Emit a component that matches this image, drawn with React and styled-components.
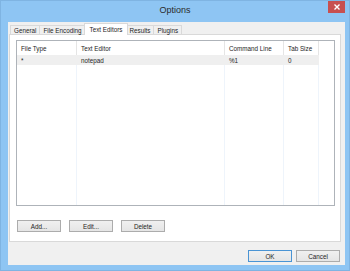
import React from "react";
import styled, { createGlobalStyle } from "styled-components";

const Global = createGlobalStyle`
  html, body {
    margin: 0;
    padding: 0;
    background: #8ec5f3;
  }
  body {
    font-family: "Liberation Sans", Arial, sans-serif;
  }
`;

const Frame = styled.div`
  width: 350px;
  height: 271px;
  box-sizing: border-box;
  background: #8ec5f3;
  border: 1px solid #7fb4e2;
  padding: 0 4px 5px 7px;
  display: flex;
  flex-direction: column;
`;

const TitleBar = styled.div`
  height: 21px;
  display: grid;
  grid-template-columns: 1fr auto 1fr;
  align-items: start;
`;

const Title = styled.div`
  grid-column: 2;
  font-size: 9px;
  color: #2b2b2b;
  margin-top: 4px;
  margin-left: -3px;
`;

const CloseBtn = styled.div`
  grid-column: 3;
  justify-self: end;
  width: 17px;
  height: 12px;
  background: #c75050;
  display: flex;
  align-items: center;
  justify-content: center;
`;

const Client = styled.div`
  flex: 1;
  background: #f0f0f0;
  padding: 2px 4px 3px 1px;
  display: flex;
  flex-direction: column;
`;

const TabRow = styled.div`
  display: flex;
  align-items: flex-end;
  height: 11px;
  padding-left: 1px;
  position: relative;
  z-index: 1;
`;

const Tab = styled.div`
  height: ${(p) => (p.$active ? "12px" : "10px")};
  box-sizing: border-box;
  padding: 0 ${(p) => (p.$active ? "5px" : "3px")};
  margin-right: ${(p) => (p.$active ? "-2px" : "0")};
  margin-left: ${(p) => (p.$active ? "-2px" : "-1px")};
  border: 1px solid #d9d9d9;
  border-bottom: ${(p) => (p.$active ? "none" : "1px solid #d9d9d9")};
  background: ${(p) => (p.$active ? "#ffffff" : "#f0f0f0")};
  font-size: 6.3px;
  color: #1e1e1e;
  display: flex;
  align-items: center;
  position: relative;
  z-index: ${(p) => (p.$active ? 2 : 1)};
  &:first-child {
    margin-left: 0;
  }
`;

const Panel = styled.div`
  height: 208px;
  box-sizing: border-box;
  border: 1px solid #d9d9d9;
  margin-top: -1px;
  background: #ffffff;
  padding: 5px 5px 0 6px;
  display: flex;
  flex-direction: column;
`;

const ListView = styled.div`
  height: 166px;
  box-sizing: border-box;
  border: 1px solid #aeb3b9;
  background: #fff;
  display: grid;
  grid-template-columns: 60px 148px 59px 35px 1fr;
`;

const Column = styled.div`
  display: flex;
  flex-direction: column;
  border-right: ${(p) => (p.$last ? "none" : "1px solid #eef4fb")};
`;

const HeadCell = styled.div`
  height: 14px;
  box-sizing: border-box;
  padding: 0 0 0 4px;
  font-size: 6.3px;
  color: #1e1e1e;
  display: flex;
  align-items: center;
  background: #fff;
  margin-right: ${(p) => (p.$last ? "0" : "-1px")};
  border-right: ${(p) => (p.$last ? "none" : "1px solid #e5e5e5")};
`;

const Cell = styled.div`
  height: 10px;
  box-sizing: border-box;
  padding: 0 0 0 4px;
  font-size: 6.3px;
  color: #1e1e1e;
  display: flex;
  align-items: center;
  background: ${(p) => (p.$blank ? "transparent" : "#efefef")};
  margin-right: ${(p) => (p.$blank ? "0" : "-1px")};
`;

const ButtonRow = styled.div`
  display: flex;
  gap: 8px;
  margin-top: 14px;
  padding-left: 1px;
`;

const Button = styled.div`
  width: 44px;
  height: 12px;
  box-sizing: border-box;
  border: 1px solid ${(p) => (p.$default ? "#4a94d4" : "#acacac")};
  background: linear-gradient(#f0f0f0, #e5e5e5);
  font-size: 6.3px;
  color: #1e1e1e;
  display: flex;
  align-items: center;
  justify-content: center;
`;

const Footer = styled.div`
  flex: 1;
  display: flex;
  justify-content: flex-end;
  align-items: flex-end;
  gap: 4px;
  padding-right: 1px;
`;

const columns = [
  { head: "File Type", value: "*" },
  { head: "Text Editor", value: "notepad" },
  { head: "Command Line", value: "%1" },
  { head: "Tab Size", value: "0" },
];

const tabs = ["General", "File Encoding", "Text Editors", "Results", "Plugins"];

export default function App() {
  return (
    <>
      <Global />
      <Frame>
        <TitleBar>
          <Title>Options</Title>
          <CloseBtn>
            <svg width="6" height="6" viewBox="0 0 6 6">
              <path d="M0.5 0.5 L5.5 5.5 M5.5 0.5 L0.5 5.5" stroke="#fff" strokeWidth="1.4" />
            </svg>
          </CloseBtn>
        </TitleBar>
        <Client>
          <TabRow>
            {tabs.map((t) => (
              <Tab key={t} $active={t === "Text Editors"}>
                {t}
              </Tab>
            ))}
          </TabRow>
          <Panel>
            <ListView>
              {columns.map((c) => (
                <Column key={c.head}>
                  <HeadCell>{c.head}</HeadCell>
                  <Cell>{c.value}</Cell>
                </Column>
              ))}
              <Column $last>
                <HeadCell $last />
                <Cell $blank />
              </Column>
            </ListView>
            <ButtonRow>
              <Button>Add...</Button>
              <Button>Edit...</Button>
              <Button>Delete</Button>
            </ButtonRow>
          </Panel>
          <Footer>
            <Button $default>OK</Button>
            <Button>Cancel</Button>
          </Footer>
        </Client>
      </Frame>
    </>
  );
}
